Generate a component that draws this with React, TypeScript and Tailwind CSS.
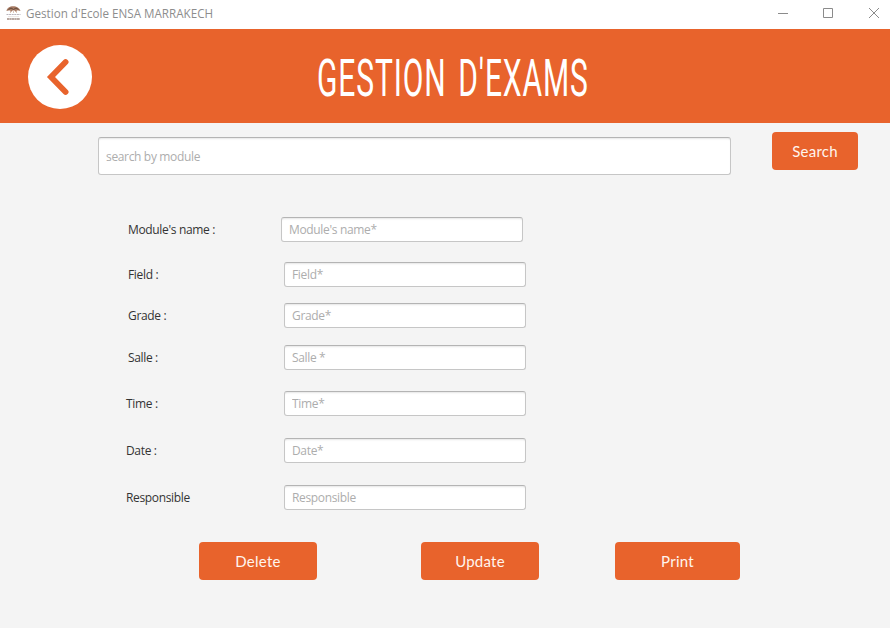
import React from "react";

type Field = { label: string; hint: string; row: string; name: string };

const fields: Field[] = [
  { label: "Module's name :", hint: "Module's name*", row: "pl-[128px]", name: "w-[153px]" },
  { label: "Field :", hint: "Field*", row: "pl-[128px] mt-5", name: "w-[156px]" },
  { label: "Grade :", hint: "Grade*", row: "pl-[128px] mt-4", name: "w-[156px]" },
  { label: "Salle :", hint: "Salle *", row: "pl-[128px] mt-[17px]", name: "w-[156px]" },
  { label: "Time :", hint: "Time*", row: "pl-[126px] mt-[21px]", name: "w-[158px]" },
  { label: "Date :", hint: "Date*", row: "pl-[126px] mt-[22px]", name: "w-[158px]" },
  { label: "Responsible", hint: "Responsible", row: "pl-[126px] mt-[22px]", name: "w-[158px]" },
];

const inputStyle =
  "block rounded-[3px] border border-[#c6c6c6] border-t-[#b4b4b4] bg-white px-[7px] text-[12px] tracking-[-0.34px] text-[#333] shadow-[inset_0_2px_2px_-1px_#e6e6e6] outline-none placeholder:text-[#adadad] placeholder:opacity-100";

function ActionButton({ text, className }: { text: string; className: string }) {
  return (
    <button
      className={`h-[38px] rounded-[4px] bg-[#e8632c] font-['Lato',sans-serif] text-[15px] tracking-[0.25px] text-[#fff5ee] ${className}`}
    >
      {text}
    </button>
  );
}

function SchoolLogo() {
  return (
    <svg className="ml-[6px] mt-[5px] h-4 w-[15px]" viewBox="0 0 15 16">
      <path d="M0.5 6 C1 -0.5 13 -0.5 14.5 6 L11.5 5.2 L10 7 L7.5 4.8 L5 7 L3.5 5.2Z" fill="#a77b63" />
      <path d="M2.5 4.5 L5 3 L7.5 4.5 L10 3 L12.5 4.5" stroke="#62483b" strokeWidth="1" fill="none" />
      <path d="M4.5 5.5V8M7.5 5V8M10.5 5.5V8" stroke="#d5b8a7" strokeWidth=".8" />
      <path d="M.5 9.5H14.5" stroke="#b9b4bc" strokeWidth="1" strokeDasharray="2 .6" />
      <path d="M2 11.6H13" stroke="#e6dddb" strokeWidth=".7" />
      <path d="M1 14H14" stroke="#b8a8a2" strokeWidth="2" strokeDasharray="2.2 .3" />
    </svg>
  );
}

export default function App() {
  return (
    <div className="h-[628px] w-[890px] overflow-hidden bg-[#f4f4f4] font-['Open_Sans','Noto_Sans',sans-serif]">
      <div className="flex h-[29px] items-start bg-white">
        <SchoolLogo />
        <span className="ml-[5px] mt-[5px] origin-left scale-x-[0.97] whitespace-nowrap text-[12px] leading-[18px] text-[#8d8d8d]">
          Gestion d'Ecole ENSA MARRAKECH
        </span>
        <svg className="ml-auto h-[29px] w-[120px]" viewBox="0 0 120 29" fill="none" stroke="#8b8b8b">
          <path d="M8 13.5H18M53.5 8.5H62.5V17.5H53.5ZM99 8L109 18M109 8L99 18" />
        </svg>
      </div>

      <header className="flex h-[94px] items-start bg-[#e8632c]">
        <button className="ml-7 mt-4 h-16 w-16 shrink-0 rounded-full bg-white">
          <svg className="h-16 w-16" viewBox="0 0 64 64" fill="none">
            <path d="M37.6 17L23 32L37.6 47" stroke="#e8632c" strokeWidth="5.8" strokeLinecap="round" strokeLinejoin="miter" />
          </svg>
        </button>
        <h1 className="ml-[225px] mt-[15px] origin-left scale-x-[0.577] whitespace-nowrap font-['Roboto',sans-serif] text-[52px] leading-[70px] tracking-[1.5px] text-white [word-spacing:6px]">
          GESTION D'EXAMS
        </h1>
      </header>

      <div className="flex items-start pl-[98px]">
        <input className={`mt-[14px] h-[38px] w-[633px] ${inputStyle}`} placeholder="search by module" />
        <ActionButton text="Search" className="ml-[41px] mt-[9px] w-[86px]" />
      </div>

      <form className="mt-[42px]">
        {fields.map((f) => (
          <div key={f.label} className={`flex h-[25px] items-center ${f.row}`}>
            <label className={`shrink-0 text-[12px] tracking-[-0.34px] text-[#333] ${f.name}`}>{f.label}</label>
            <input className={`h-[25px] w-[242px] ${inputStyle}`} placeholder={f.hint} />
          </div>
        ))}
      </form>

      <div className="mt-8 flex pl-[199px]">
        <ActionButton text="Delete" className="w-[118px]" />
        <ActionButton text="Update" className="ml-[104px] w-[118px]" />
        <ActionButton text="Print" className="ml-[76px] w-[125px]" />
      </div>
    </div>
  );
}
